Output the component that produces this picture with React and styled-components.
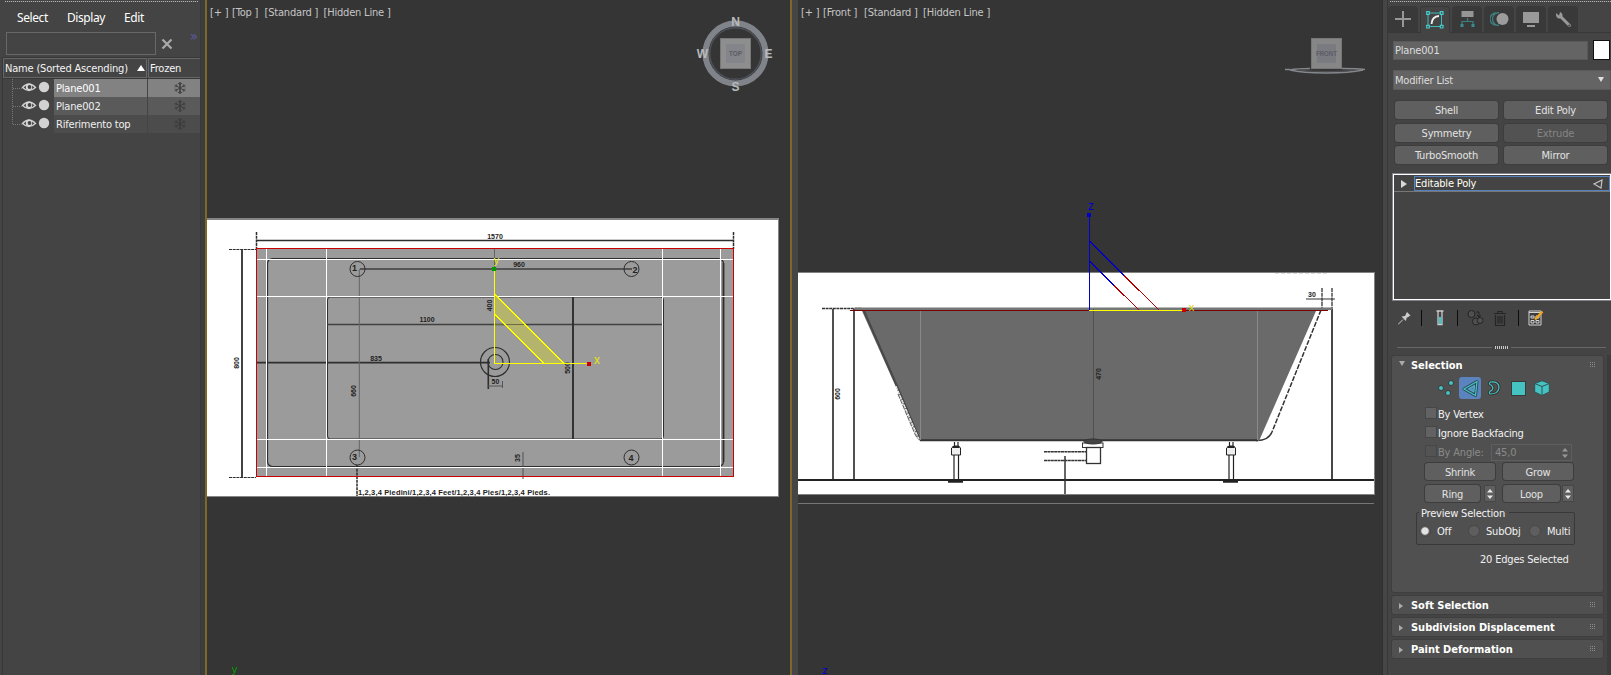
import React from 'react';
import styled, { createGlobalStyle, css } from 'styled-components';

const Global = createGlobalStyle`
  *, *::before, *::after { box-sizing: border-box; }
  html, body { margin: 0; background: #444; overflow: hidden; }
  body {
    font: 11px/14px "DejaVu Sans Condensed", "DejaVu Sans", sans-serif;
    letter-spacing: -0.19px;
    color: #e6e6e6;
  }
`;

const Shell = styled.div`
  display: flex;
  width: 1611px;
  height: 675px;
  overflow: hidden;
  white-space: nowrap;
`;

/* ---------- scene explorer ---------- */

const Explorer = styled.aside`
  flex: 0 0 205px;
  min-width: 0;
  display: flex;
  flex-direction: column;
  padding-left: 2px;
  background: #444;
  border-right: 4px solid #3d3d3d;
  box-shadow: inset -1px 0 0 #393939;
`;
const Dots = styled.div`
  height: 1px;
  margin: 1px ${(p) => p.$right}px 0 ${(p) => p.$left}px;
  background: repeating-linear-gradient(90deg, #b4b4b4 0 1px, #555 1px 2px);
`;
const MenuBar = styled.nav`
  display: flex;
  gap: 19px;
  height: 30px;
  padding: 7px 0 0 15px;
  color: #fff;
  font: 12px/18px "Noto Sans", sans-serif;
  letter-spacing: -0.4px;
`;
const SearchRow = styled.div`
  display: flex;
  align-items: center;
  height: 23px;
  padding-left: 4px;
  svg { margin-left: 5px; }
`;
const SearchBox = styled.div`
  width: 150px;
  height: 23px;
  border: 1px solid #686868;
`;
const More = styled.span`
  color: #5b5ba2;
  margin: -15px 0 0 17px;
  font-size: 14px;
`;
const ListHead = styled.div`
  display: flex;
  height: 22px;
  margin-top: 2px;
  border: 1px solid #373737;
  border-right: 0;
`;
const HeadCell = styled.div`
  width: ${(p) => p.$w}px;
  border: 1px solid #666;
  border-right-width: ${(p) => (p.$last ? 0 : 1)}px;
  margin-right: ${(p) => (p.$last ? 0 : 1)}px;
  padding: 3px 0 0 ${(p) => p.$pad}px;
  color: #f4f4f4;
  display: flex;
  justify-content: space-between;
`;
const SortMark = styled.i`
  align-self: flex-start;
  margin: 3px 1px 0 0;
  border: 4px solid transparent;
  border-top: 0;
  border-bottom: 6px solid #fff;
`;
const List = styled.div`
  flex: 1;
  border-left: 1px solid #373737;
`;
const tones = ['#828282', '#5a5a5a', '#4c4c4c'];
const ListRow = styled.div`
  display: grid;
  grid-template-columns: 50px 93px 52px;
  column-gap: 1px;
  height: 18px;
  color: ${(p) => (p.$tone === 0 ? '#fff' : '#f0f0f0')};
`;
const NameCell = styled.div`
  background: ${(p) => tones[p.$tone]};
  padding: 3px 0 0 2px;
`;
const FrozenCell = styled.div`
  background: ${(p) => tones[p.$tone]};
  display: flex;
  align-items: center;
  padding-left: 26px;
`;

const Gutter = ({ last }) => (
  <svg width="50" height="18" viewBox="0 0 50 18">
    <path d={`M9.5 0V${last ? 9 : 18}M10 9.5H19`} stroke="#777" strokeDasharray="1 1" fill="none" />
    <path d="M19.5 8.5Q26 1.5 32.5 8.5Q26 14.5 19.5 8.5Z" fill="none" stroke="#cfcfcf" strokeWidth="1.4" />
    <circle cx="26" cy="8" r="3.2" fill="#d8d8d8" />
    <circle cx="26.5" cy="8" r="1.9" fill="#444" />
    <circle cx="41" cy="8" r="5.2" fill="#d2d2d2" />
  </svg>
);
const Flake = () => (
  <svg width="12" height="12" viewBox="0 0 12 12" stroke="#3b3b3b" fill="none">
    <path d="M6 0V12" strokeWidth="1.4" />
    <path d="M.8 3L11.2 9M.8 9L11.2 3M4 1L6 3L8 1M4 11L6 9L8 11" strokeWidth=".9" />
    <path d="M.5 5L3 4.500L2.500 2M11.500 5L9 4.500L9.500 2M.5 7L3 7.500L2.500 10M11.500 7L9 7.500L9.500 10" strokeWidth=".6" />
  </svg>
);

/* ---------- viewports ---------- */

const Viewport = styled.section`
  flex: 0 0 ${(p) => p.$w}px;
  min-width: 0;
  display: grid;
  background: #353535;
  border-left: ${(p) => (p.$active ? '2px solid #7d672b' : '6px solid #454545')};
  border-right: ${(p) => (p.$active ? '2px solid #7d672b' : '1px solid #303030')};
  > * { grid-area: 1 / 1; }
`;
const ViewLabel = styled.div`
  display: flex;
  padding: 6px 0 0 3px;
  color: #c6c6c6;
  height: 20px;
`;
const Part = styled.span`
  width: ${(p) => p.$w}px;
`;
const Scene = styled.svg`
  display: block;
  letter-spacing: 0;
  text { font-family: "Liberation Sans", sans-serif; }
`;

const Dim = ({ x, y, v, text, size = 7 }) => (
  <text x={x} y={y} fontSize={size} fontWeight="700" fill="#222" textAnchor="middle"
    dominantBaseline="central" transform={v ? `rotate(-90 ${x} ${y})` : undefined}>{text}</text>
);

const TopScene = () => (
  <Scene width="583" height="675" viewBox="207 0 583 675">
    <path d="M207 218H779V497H207Z" fill="#858585" />
    <path d="M207 220H778V496H207Z" fill="#fff" />
    <path d="M257 249H733V476H257Z" fill="#9b9b9b" />
    <g fill="none" stroke="#2e2e2e">
      <path d="M256 240.500H734" strokeWidth="1.500" />
      <path d="M256.500 232V249M733.500 232V249M357 465V496" strokeWidth="1.500" strokeDasharray="3 .7" />
      <path d="M242 249V477" strokeWidth="1.800" />
      <path d="M229 249.500H256M229 477.500H256" strokeDasharray="3 .7" />
      <rect x="267.500" y="258.500" width="456" height="208" rx="5" strokeWidth="1.200" />
      <path d="M723.500 263V462" strokeWidth="1.700" />
      <rect x="327.500" y="297" width="336" height="142" rx="3" />
      <path d="M327 324.500H664" stroke="#404040" strokeWidth="1.300" />
      <path d="M257 362.700H490" strokeWidth="1.700" />
      <path d="M573 297V440" strokeWidth="1.900" />
      <path d="M360 269H632" stroke="#555" strokeWidth="1.800" />
      <path d="M359.300 269V457M494.500 249V269" stroke="#646464" />
      <circle cx="357.500" cy="269" r="7.500" /><circle cx="631.500" cy="269" r="7.500" />
      <circle cx="357.500" cy="457.500" r="7.500" /><circle cx="631.500" cy="457.500" r="7.500" />
      <circle cx="495" cy="362" r="14.500" strokeWidth="1.200" /><circle cx="495.500" cy="362" r="7.500" strokeWidth="1.100" />
      <path d="M488.300 359V389" strokeWidth="1.600" />
      <path d="M488 386H503M502.500 381V388" stroke="#555" />
      <path d="M523 452V479" stroke="#505050" />
    </g>
    <Dim x={495} y={236} text="1570" /><Dim x={519} y={264} text="960" />
    <Dim x={427} y={319} text="1100" /><Dim x={376} y={358} text="835" />
    <Dim x={495.5} y={381} text="50" /><Dim x={236.5} y={363} text="800" v />
    <Dim x={353.5} y={391} text="660" v /><Dim x={489} y={305.5} text="400" v />
    <Dim x={567.5} y={368} text="500" v /><Dim x={517.5} y={458} text="35" v />
    <Dim x={354.5} y={268} text="1" size={9} /><Dim x={635} y={269.5} text="2" size={9} />
    <Dim x={354.5} y={457} text="3" size={9} /><Dim x={631} y={457.5} text="4" size={9} />
    <text x="358" y="495" fontSize="7.500" fontWeight="700" fill="#222" textLength="192">
      1,2,3,4 Piedini/1,2,3,4 Feet/1,2,3,4 Pies/1,2,3,4 Pieds.
    </text>
    <g fill="none" stroke="#fff" shapeRendering="crispEdges">
      <path d="M266.500 249V476M326.500 249V476M662.500 249V476M720.500 249V476" />
      <path d="M257 259.500H733M257 296.500H733M257 439.500H733M257 467.500H733" />
      <path d="M256.500 248.500H733.500V476.500H256.500Z" stroke="#c80000" />
    </g>
    <path d="M494.500 294L564 363.500H544L494.500 314Z" fill="#b4b46c" />
    <path d="M494.500 324.500H525" stroke="#6c6c40" />
    <g fill="none" stroke="#ff0" shapeRendering="crispEdges">
      <path d="M494.500 269V363.500H588M494.500 294L564 363.500M494.500 314L544 363.500" />
    </g>
    <path d="M492 267H496V271H492Z" fill="#009a00" />
    <path d="M587 362H591V366H587Z" fill="#c80000" />
    <text x="496.500" y="264" textAnchor="middle" fontSize="11" fill="#e6e600">y</text>
    <text x="597" y="364" textAnchor="middle" fontSize="12" fill="#e6e600">x</text>
    <text x="234.500" y="673" textAnchor="middle" fontSize="11" fill="#00a000">y</text>

    <circle cx="735.500" cy="53.500" r="30" fill="none" stroke="#80848a" strokeWidth="6" />
    <circle cx="735.500" cy="53.500" r="25.800" fill="none" stroke="#4c5159" strokeWidth="1.500" />
    <rect x="720.500" y="38.500" width="30" height="30" fill="#8e8e8e" stroke="#777" />
    <rect x="726" y="44" width="19" height="19" fill="#83858a" />
    <text x="735.500" y="56.300" textAnchor="middle" fontSize="7.500" fontWeight="700" fill="#5a5c62" textLength="13" lengthAdjust="spacingAndGlyphs">TOP</text>
    <g fill="#b9babc" fontSize="12" fontWeight="700" textAnchor="middle">
      <text x="735.500" y="25.500">N</text><text x="768.500" y="58.200">E</text>
      <text x="735.500" y="91">S</text><text x="702.500" y="58.200">W</text>
    </g>
  </Scene>
);

const Foot = ({ x }) => (
  <g fill="none" stroke="#222">
    <path d={`M${x - 1.5} 442V446M${x + 2} 442V446M${x - 2} 455V480M${x + 2.5} 455V480`} strokeWidth="1.2" />
    <path d={`M${x - 4.5} 455V448L${x - 2} 446H${x + 2.5}L${x + 4.5} 448V455Z`} fill="#eee" />
    <path d={`M${x - 3.5} 447H${x + 3.5}`} strokeWidth="2" />
    <path d={`M${x - 8} 481.500H${x + 7}`} strokeWidth="2.5" />
  </g>
);

const FrontScene = () => (
  <Scene width="584" height="675" viewBox="798 0 584 675">
    <path d="M798 272H1375V495H798Z" fill="#808380" />
    <path d="M798 273H1374V494H798Z" fill="#fff" />
    <path d="M798 503.500H1374" stroke="#777" shapeRendering="crispEdges" />
    <path d="M1275 273.500H1328" stroke="#ddd" strokeDasharray="4 2" />
    <g fill="none" stroke="#333">
      <path d="M822 308.500H862" strokeWidth="1.500" strokeDasharray="3 .6" />
      <path d="M833 309V480M854 309V480" strokeWidth="1.700" />
      <path d="M1332 309V480" strokeWidth="1.800" />
      <path d="M1322 288V310M1332 288V309" strokeWidth="1.300" strokeDasharray="4 .7" />
      <path d="M1306 299H1335" />
      <path d="M898 394L915 434Q917 438 920 440" stroke="#666" strokeWidth="1.100" strokeDasharray="5 1" />
      <path d="M1321 310L1272 432" strokeWidth="1.500" strokeDasharray="5 1.500" />
      <path d="M1272 432Q1268 441 1256 440.500" strokeWidth="1.500" />
    </g>
    <path d="M862 311H1316L1259 441H920Z" fill="#6a6a6a" />
    <path d="M855 308.700H1332" stroke="#747876" strokeWidth="2.600" />
    <path d="M920 440.300H1258" stroke="#333" strokeWidth="2" />
    <path d="M864 311L897 386L919 438" stroke="#484848" strokeWidth="2" fill="none" />
    <path d="M896 386L919 439" stroke="#fff" strokeDasharray="4 1" />
    <path d="M920.500 311V440M1257.500 311V440" stroke="#898989" shapeRendering="crispEdges" />
    <path d="M1093.500 309V440" stroke="#505050" />
    <path d="M798 480H1374" stroke="#222" strokeWidth="2" />
    <Foot x={956} /><Foot x={1231} />
    <g fill="#fff" stroke="#333">
      <path d="M1065 456V494" strokeWidth="1.500" />
      <path d="M1044 451.800H1087M1044 460.500H1087" strokeWidth="1.500" strokeDasharray="3 .4" />
      <rect x="1082.500" y="443" width="20.500" height="4.500" />
      <rect x="1086.500" y="447.500" width="14" height="16" strokeWidth="1.300" />
      <ellipse cx="1093" cy="441.500" rx="9" ry="2.500" fill="#444" />
    </g>
    <Dim x={837.5} y={394} text="600" v /><Dim x={1098} y={374} text="470" v /><Dim x={1312} y={294} text="30" />
    <g fill="none" shapeRendering="crispEdges">
      <path d="M850 310.500H1328" stroke="#780000" />
      <path d="M1089.500 215V310.500M1089.500 241L1124 275.500M1089.500 261L1114 285.500" stroke="#0000c8" />
      <path d="M1124 275.500L1159 310M1114 285.500L1139 310" stroke="#b40000" />
      <path d="M1089 310.500H1183" stroke="#ff0" />
    </g>
    <path d="M1087 213H1091V217H1087Z" fill="#0000c8" />
    <path d="M1182 308H1186V312H1182Z" fill="#c80000" />
    <text x="1091" y="210" textAnchor="middle" fontSize="12" fill="#0000d0">z</text>
    <text x="1191.500" y="310.500" textAnchor="middle" fontSize="11" fill="#dcdc00">x</text>
    <text x="825" y="673.500" textAnchor="middle" fontSize="11" fill="#0000d0">z</text>

    <path d="M1285 69.500H1290M1290 70Q1297 68.500 1310 68.500M1342 68.500Q1356 68.500 1365 69.500" fill="none" stroke="#84888d" strokeWidth="1.300" />
    <path d="M1290 70Q1302 73 1326 73Q1350 73 1363 70" fill="none" stroke="#84888d" strokeWidth="1.300" />
    <path d="M1298 70Q1310 71.500 1326 71.500Q1344 71.500 1354 70" fill="none" stroke="#55585c" strokeWidth=".8" />
    <rect x="1311.500" y="38.500" width="30" height="30" fill="#868686" stroke="#777" />
    <rect x="1317" y="44" width="19" height="19" fill="#797b81" />
    <text x="1326.500" y="56.300" textAnchor="middle" fontSize="7.500" fontWeight="700" fill="#5b5d68" textLength="21" lengthAdjust="spacingAndGlyphs">FRONT</text>
  </Scene>
);

/* ---------- command panel ---------- */

const Panel = styled.aside`
  flex: 0 0 228px;
  min-width: 0;
  display: flex;
  flex-direction: column;
  background: #444;
  border-left: 4px solid #464646;
  box-shadow: inset 1px 0 0 #383838;
`;
const Tabs = styled.div`
  display: flex;
  gap: 2px;
  height: 31px;
  padding: 4px 0 0 1px;
  border-bottom: 1px solid #383838;
`;
const Tab = styled.div`
  width: 30px;
  height: ${(p) => (p.$on ? 27 : 26)}px;
  border-radius: 4px 4px 0 0;
  background: ${(p) => (p.$on ? '#444' : '#393939')};
  border: ${(p) => (p.$on ? '1px solid #383838' : '0')};
  border-bottom: 0;
  display: grid;
  place-items: center;
`;
const NameRow = styled.div`
  display: flex;
  gap: 5px;
  margin: 7px 0 0 6px;
  height: 21px;
`;
const Field = styled.div`
  height: 19px;
  background: #646464;
  border: 1px solid #595959;
  color: #dedede;
  padding: 2px 1px;
  ${(p) => p.$combo && css`
    display: flex;
    justify-content: space-between;
    height: 20px;
    margin: 9px 0 0 6px;
    padding: 3px 6px 0 1px;
  `}
  ${(p) => p.$name && css`width: 195px; margin-top: 1px;`}
`;
const Swatch = styled.div`
  width: 17px;
  height: 20px;
  background: #fff;
  border: 1px solid #111;
`;
const Down = styled.i`
  margin-top: 3px;
  align-self: flex-start;
  justify-self: start;
  border: 3px solid transparent;
  border-bottom: 0;
  border-top: ${(p) => p.$h || 5}px solid ${(p) => p.$c || '#e0e0e0'};
`;
const Right = styled.i`
  justify-self: start;
  border: ${(p) => p.$s || 4}px solid transparent;
  border-right: 0;
  border-left: ${(p) => p.$w || 6}px solid ${(p) => p.$c || '#d8d8d8'};
`;
const Btn = styled.div`
  height: ${(p) => p.$h || 18}px;
  border-radius: 3px;
  background: #5f5f5f;
  box-shadow: 0 0 0 1px #3d3d3d;
  color: ${(p) => (p.$off ? '#858585' : '#e2e2e2')};
  text-align: center;
  line-height: ${(p) => (p.$h || 18) + 2}px;
  ${(p) => p.$off && 'background:#525252;'}
`;
const ModGrid = styled.div`
  display: grid;
  grid-template-columns: 103px 103px;
  grid-template-rows: 18px 18px 18px;
  gap: 4.5px 6px;
  margin: 11px 0 0 8px;
`;
const Stack = styled.div`
  height: 128px;
  margin: 9px 0 0 5px;
  border: 1px solid #82828a;
  border-right: 0;
  box-shadow: inset 1px 1px 0 #fff, inset 0 -1px 0 #fff, inset -1px 0 0 #fff;
  padding: 2px 1px;
`;
const StackRow = styled.div`
  display: flex;
  align-items: center;
  gap: 7px;
  height: 16px;
  padding-left: 7px;
  border-bottom: 1px solid #777;
`;
const StackItem = styled.div`
  flex: 1;
  height: 15px;
  border: 1px solid #5783bd;
  display: flex;
  justify-content: space-between;
  align-items: center;
  color: #fffff2;
  padding: 0 6px 0 0;
`;
const Tools = styled.div`
  display: grid;
  grid-template-columns: 30px 36px 36px 24px 42px 30px;
  align-items: center;
  height: 34px;
  padding-left: 5px;
`;
const Tool = styled.div`
  display: flex;
  height: 16px;
  align-items: center;
  padding-left: ${(p) => p.$pad}px;
  box-shadow: ${(p) => (p.$sep ? 'inset -1px 0 0 #0c0c0c' : 'none')};
`;
const Bar = styled.i`
  width: 1px;
  height: 16px;
  margin: 0 9px 0 0;
  background: #0c0c0c;
`;
const Splitter = styled.div`
  display: flex;
  align-items: center;
  gap: 3px;
  margin: 10px 5px 0 10px;
  height: 4px;
  &::before, &::after { content: ''; flex: 1; height: 1px; background: #686868; }
`;
const SplitDots = styled.i`
  width: 13px;
  height: 3px;
  background: repeating-linear-gradient(90deg, #c8c8c8 0 1px, transparent 1px 2px);
`;
const Rollouts = styled.div`
  flex: 1;
  display: flex;
  flex-direction: column;
  gap: 2px;
  margin-top: 6px;
  padding: 0 3px 0 4px;
  border-right: 4px solid #3c3c3c;
`;
const Rollout = styled.section`
  height: ${(p) => p.$h}px;
  border: 1px solid #3e3e3e;
  border-radius: 3px;
  background: #505050;
`;
const RollHead = styled.header`
  display: grid;
  grid-template-columns: 12px 1fr 13px;
  height: 18px;
  padding: 2px 0 0 7px;
  align-items: center;
  color: #fff;
  font-weight: 700;
  letter-spacing: -0.02px;
`;
const GripMark = styled.svg`
  margin-top: -4px;
`;
const Body = styled.div`
  display: flex;
  flex-direction: column;
  padding-left: 1px;
`;
const Levels = styled.div`
  display: flex;
  align-items: center;
  height: 22px;
  margin: 3px 0 6px 41px;
`;
const Level = styled.div`
  width: ${(p) => (p.$on ? 22 : 24)}px;
  margin: 0 ${(p) => (p.$on ? 1 : 0)}px;
  height: 22px;
  display: grid;
  place-items: center;
  border-radius: 3px;
  background: ${(p) => (p.$on ? '#5b83bd' : 'transparent')};
`;
const Check = styled.div`
  display: flex;
  align-items: center;
  gap: 1px;
  height: 19px;
  margin-left: 32px;
  color: ${(p) => (p.$off ? '#8a8a8a' : '#f2f2f2')};
  &::before {
    content: '';
    width: 12px;
    height: 12px;
    margin-top: -3px;
    background: ${(p) => (p.$off ? '#535353' : '#626262')};
    border: 1px solid #464646;
  }
`;
const CheckText = styled.span`
  width: ${(p) => p.$w || 90}px;
`;
const Angle = styled.div`
  width: 81px;
  height: 17px;
  border: 1px solid #5e5e5e;
  display: flex;
  justify-content: space-between;
  align-items: center;
  padding: 0 3px;
`;
const Line = styled.div`
  display: grid;
  grid-template-columns: ${(p) => p.$cols};
  column-gap: ${(p) => p.$gap}px;
  margin: ${(p) => p.$top}px 0 0 32px;
`;
const Pair = styled.div`
  display: grid;
  grid-template-columns: 1fr 12px;
  column-gap: ${(p) => p.$gap}px;
`;
const Group = styled.div`
  width: 159px;
  height: 33px;
  margin: 10px 0 0 23px;
  border: 1px solid #393939;
  border-radius: 2px;
`;
const Legend = styled.div`
  width: 90px;
  margin: -6px 0 0 2px;
  padding-left: 2px;
  background: #505050;
  color: #f2f2f2;
`;
const Radios = styled.div`
  display: grid;
  grid-template-columns: 49px 61px 44px;
  padding-left: 2px;
  margin-top: 4px;
`;
const Radio = styled.div`
  display: flex;
  align-items: center;
  gap: 6px;
  color: #f0f0f0;
  &::before {
    content: '';
    width: 12px;
    height: 12px;
    margin-top: -3px;
    border-radius: 50%;
    background: ${(p) => (p.$on ? 'radial-gradient(circle, #e2e2e2 0 3.2px, #606060 4.2px)' : '#5e5e5e')};
    border: 1px solid #484848;
  }
`;
const Status = styled.div`
  margin: 8px 0 0 87px;
  color: #f0f0f0;
`;
const SpinIcon = styled.svg`
  display: block;
`;
const Spin = ({ c = '#e8e8e8' }) => (
  <SpinIcon width="6" height="10" viewBox="0 0 6 10">
    <path d="M3 0L6 3.500H0ZM0 6.500H6L3 10Z" fill={c} />
  </SpinIcon>
);
const SpinBox = styled(Btn)`
  display: grid;
  place-items: center;
  border-radius: 1px;
  box-shadow: inset 0 0 0 1px #464646;
`;
const Grip = () => (
  <GripMark width="6" height="5" viewBox="0 0 6 5" shapeRendering="crispEdges">
    <path d="M0 .5H6M0 2.500H6M0 4.500H6" stroke="#8c8c8c" strokeDasharray="1 1" />
  </GripMark>
);

const tabIcons = [
  <svg key="c" width="16" height="16" viewBox="0 0 16 16"><path d="M8 0V16M0 8H16" stroke="#979797" strokeWidth="2" /></svg>,
  <svg key="m" width="18" height="18" viewBox="0 0 18 18" fill="none">
    <path d="M4 2H14M4 15.500H14M2 4V14M15.500 4V14" stroke="#3dbbbb" />
    <path d="M.7.7H3.300V3.300H.7ZM14.300.7H17V3.300H14.300ZM.7 14.300H3.300V17H.7ZM14.300 14.300H17V17H14.300Z" stroke="#47caca" strokeWidth="1.200" />
    <path d="M5.500 13Q6 5.500 13 5" stroke="#f0f0f0" strokeWidth="1.800" />
  </svg>,
  <svg key="h" width="15" height="17" viewBox="0 0 15 17"><path d="M1.500 0H13.500V6H1.500Z" fill="#969696" /><path d="M7.500 7V10M2 14V10.500H13V14" fill="none" stroke="#3d8080" strokeWidth="1.200" /><path d="M.5 13H3.500V16H.5ZM11.500 13H14.500V16H11.500Z" fill="#3d8c8c" /></svg>,
  <svg key="o" width="19" height="14" viewBox="0 0 19 14"><path d="M6 1A6 6 0 0 0 6 13M9 .5A6.500 6.500 0 0 0 9 13.500" fill="none" stroke="#3d8080" strokeWidth="1.300" /><circle cx="12.500" cy="7" r="6" fill="#9c9c9c" /></svg>,
  <svg key="d" width="16" height="15" viewBox="0 0 16 15"><path d="M0 0H16V11H0ZM4 13H12V15H4Z" fill="#999" /></svg>,
  <svg key="u" width="17" height="17" viewBox="0 0 17 17"><path d="M6 6L14.500 14.500" stroke="#999" strokeWidth="3" strokeLinecap="round" /><path d="M1 2L4 4.500L5 1Q8 2 7.500 5.500Q6 8.500 2.500 7Q.5 5 1 2Z" fill="#999" /><circle cx="14.300" cy="14.500" r=".9" fill="#393939" /></svg>,
];

const teal = '#45c3c3';
const levelIcons = [
  <svg key="v" width="16" height="16" viewBox="0 0 16 16" fill={teal} stroke="#393939"><circle cx="3" cy="8" r="2.500" /><circle cx="13" cy="3" r="2.500" /><circle cx="10" cy="13" r="2.500" /></svg>,
  <svg key="e" width="17" height="17" viewBox="0 0 17 17" fill="none"><path d="M15 1.500L2 9L13.500 15.500Z" stroke="#2d4250" strokeWidth="3" strokeLinejoin="round" /><path d="M15 1.500L2 9L13.500 15.500Z" stroke={teal} strokeWidth="1.300" /><path d="M12.500 5.500L7 8.700L11.800 11.700Z" stroke={teal} strokeWidth=".9" /></svg>,
  <svg key="b" width="14" height="16" viewBox="0 0 14 16" fill="none"><path d="M3.500 2Q12 1 12 8Q11 14 3 14Q1 12 5 10Q7 7.500 4 5Q1 4 3.500 2Z" stroke="#343434" strokeWidth="3" /><path d="M3.500 2Q12 1 12 8Q11 14 3 14Q1 12 5 10Q7 7.500 4 5Q1 4 3.500 2Z" stroke={teal} strokeWidth="1.200" /></svg>,
  <svg key="p" width="15" height="15" viewBox="0 0 15 15"><rect x=".5" y=".5" width="14" height="14" fill={teal} stroke="#393939" /></svg>,
  <svg key="x" width="16" height="16" viewBox="0 0 16 16" fill={teal} stroke="#35504f" strokeLinejoin="round"><path d="M8 .7L15.300 3.500V12L8 15.500L.7 12V3.500Z" /><path d="M.7 3.500L8 6.500L15.300 3.500M8 6.500V15" fill="none" /></svg>,
];

const rows = ['Plane001', 'Plane002', 'Riferimento top'];
const mods = ['Shell', 'Edit Poly', 'Symmetry', 'Extrude', 'TurboSmooth', 'Mirror'];

export default function App() {
  return (
    <Shell>
      <Global />
      <Explorer>
        <Dots $left={3} $right={3} />
        <MenuBar><span>Select</span><span>Display</span><span>Edit</span></MenuBar>
        <SearchRow>
          <SearchBox />
          <svg width="12" height="12" viewBox="0 0 12 12"><path d="M1.500 1.500L10.500 10.500M10.500 1.500L1.500 10.500" stroke="#aaa" strokeWidth="2.200" /></svg>
          <More>»</More>
        </SearchRow>
        <ListHead>
          <HeadCell $w={144} $pad={1}>Name (Sorted Ascending)<SortMark /></HeadCell>
          <HeadCell $w={52} $pad={1} $last>Frozen</HeadCell>
        </ListHead>
        <List>
          {rows.map((name, i) => (
            <ListRow key={name} $tone={i}>
              <Gutter last={i === 2} />
              <NameCell $tone={i}>{name}</NameCell>
              <FrozenCell $tone={i}><Flake /></FrozenCell>
            </ListRow>
          ))}
        </List>
      </Explorer>

      <Viewport $w={587} $active>
        <TopScene />
        <ViewLabel>
          <Part $w={22}>[+ ]</Part><Part $w={32.5}>[Top ]</Part><Part $w={59}>[Standard ]</Part><Part $w={70}>[Hidden Line ]</Part>
        </ViewLabel>
      </Viewport>
      <Viewport $w={591}>
        <FrontScene />
        <ViewLabel>
          <Part $w={22}>[+ ]</Part><Part $w={41}>[Front ]</Part><Part $w={59}>[Standard ]</Part><Part $w={70}>[Hidden Line ]</Part>
        </ViewLabel>
      </Viewport>

      <Panel>
        <Dots $left={3} $right={0} />
        <Tabs>{tabIcons.map((icon, i) => <Tab key={i} $on={i === 1}>{icon}</Tab>)}</Tabs>
        <NameRow><Field $name>Plane001</Field><Swatch /></NameRow>
        <Field $combo>Modifier List<Down /></Field>
        <ModGrid>{mods.map((m) => <Btn key={m} $off={m === 'Extrude'}>{m}</Btn>)}</ModGrid>
        <Stack>
          <StackRow>
            <Right />
            <StackItem>
              Editable Poly
              <svg width="10" height="10" viewBox="0 0 10 10"><path d="M9 1L1 5L8 9Z" fill="none" stroke="#c4c4c4" strokeWidth="1.200" /></svg>
            </StackItem>
          </StackRow>
        </Stack>
        <Tools>
          <Tool $pad={6} $sep><svg width="13" height="14" viewBox="0 0 13 14"><path d="M0 13.500L5 8.500" stroke="#ccc" /><path d="M3.500 5.500L7 5L9 1L12.500 4.500L8.500 7L8 10Z" fill="#ccc" /></svg></Tool>
          <Tool $pad={14} $sep><svg width="8" height="16" viewBox="0 0 8 16"><path d="M.5 1H7.500M2 1V14.500H6V1" fill="none" stroke="#ccc" strokeWidth="1.300" /><path d="M3 7H5.500V14H3Z" fill={teal} /></svg></Tool>
          <Tool $pad={9}><svg width="17" height="16" viewBox="0 0 17 16" fill="#505050" stroke="#242424"><circle cx="4.500" cy="4" r="3.500" /><circle cx="9" cy="11.500" r="3.500" /><circle cx="13" cy="10.500" r="3" /><path d="M9 2H12V6M10 5L12 7L14 5" fill="none" /></svg></Tool>
          <Tool $pad={0}><svg width="12" height="15" viewBox="0 0 12 15" fill="none" stroke="#252525"><path d="M0 2.500H12M4 2V.5H8V2M1.500 4V14.500H10.500V4M4 5V12.500M6 5V12.500M8 5V12.500" strokeWidth="1.200" /></svg></Tool>
          <Tool $pad={0}><Bar /><svg width="17" height="16" viewBox="0 0 17 16"><path d="M1 1H13V15H1Z" fill="#3c3c3c" stroke="#d4d4d4" /><path d="M1 2.500H13M3 6H6V8H3ZM8 6H11V8H8ZM3 10.500H6V13H3ZM8 10.500H11V13H8Z" fill="none" stroke="#d4d4d4" /><path d="M7 9.500L14.500 1.500" stroke="#f3a51c" strokeWidth="2.400" /></svg></Tool>
        </Tools>
        <Splitter><SplitDots /></Splitter>
        <Rollouts>
          <Rollout $h={238}>
            <RollHead><Down $h={5} $c="#aaa" />Selection<Grip /></RollHead>
            <Body>
              <Levels>{levelIcons.map((icon, i) => <Level key={i} $on={i === 1}>{icon}</Level>)}</Levels>
              <Check><CheckText>By Vertex</CheckText></Check>
              <Check><CheckText>Ignore Backfacing</CheckText></Check>
              <Check $off><CheckText $w={52}>By Angle:</CheckText><Angle>45,0<Spin c="#999" /></Angle></Check>
              <Line $cols="70px 70px" $gap={8} $top={1}><Btn $h={17}>Shrink</Btn><Btn $h={17}>Grow</Btn></Line>
              <Line $cols="71px 71px" $gap={7} $top={5}>
                <Pair $gap={4}><Btn $h={17}>Ring</Btn><SpinBox $h={17}><Spin /></SpinBox></Pair>
                <Pair $gap={2}><Btn $h={17}>Loop</Btn><SpinBox $h={17}><Spin /></SpinBox></Pair>
              </Line>
              <Group>
                <Legend>Preview Selection</Legend>
                <Radios><Radio $on>Off</Radio><Radio>SubObj</Radio><Radio>Multi</Radio></Radios>
              </Group>
              <Status>20 Edges Selected</Status>
            </Body>
          </Rollout>
          {['Soft Selection', 'Subdivision Displacement', 'Paint Deformation'].map((t) => (
            <Rollout key={t} $h={20}>
              <RollHead><Right $s={3} $w={4} $c="#aaa" />{t}<Grip /></RollHead>
            </Rollout>
          ))}
        </Rollouts>
      </Panel>
    </Shell>
  );
}
